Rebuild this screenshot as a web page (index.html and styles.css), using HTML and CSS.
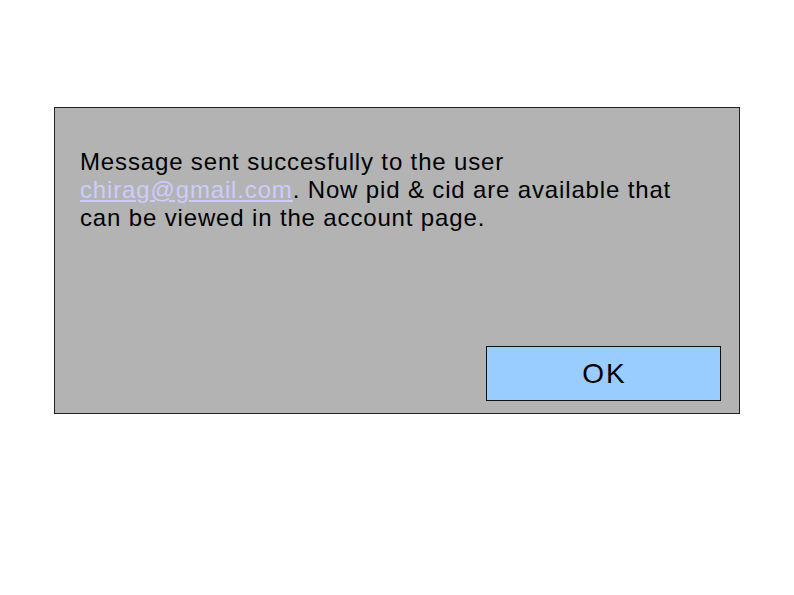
FILE: index.html
```html
<!DOCTYPE html>
<html>
<head>
<meta charset="utf-8">
<link rel="stylesheet" href="styles.css">
</head>
<body>
<div class="dialog">
  <p class="message">Message sent succesfully to the user <a class="link" href="#">chirag@gmail.com</a>. Now pid &amp; cid are available that can be viewed in the account page.</p>
  <div class="actions">
    <button class="ok">OK</button>
  </div>
</div>
</body>
</html>
```
FILE: styles.css
```css
html, body {
  margin: 0;
  padding: 0;
  background: #ffffff;
}
body {
  width: 794px;
  height: 595px;
  padding-top: 107px;
  padding-left: 54px;
  box-sizing: border-box;
  font-family: "Liberation Sans", Arial, sans-serif;
}
.dialog {
  width: 686px;
  height: 307px;
  box-sizing: border-box;
  border: 1px solid #222;
  background: #b3b3b3;
  display: flex;
  flex-direction: column;
  padding: 40px 18px 12px 25px;
}
.message {
  margin: 0;
  width: 610px;
  font-size: 24px;
  letter-spacing: 0.85px;
  line-height: 28px;
  color: #000;
}
.link {
  color: #ccccff;
  text-decoration: underline;
}
.actions {
  margin-top: auto;
  display: flex;
  justify-content: flex-end;
}
.ok {
  width: 235px;
  height: 55px;
  box-sizing: border-box;
  border: 1px solid #111;
  background: #99ccff;
  font-family: "Liberation Sans", Arial, sans-serif;
  font-size: 28px;
  letter-spacing: 2px;
  text-indent: 2px;
  color: #000;
  padding: 0;
  border-radius: 0;
}
```
